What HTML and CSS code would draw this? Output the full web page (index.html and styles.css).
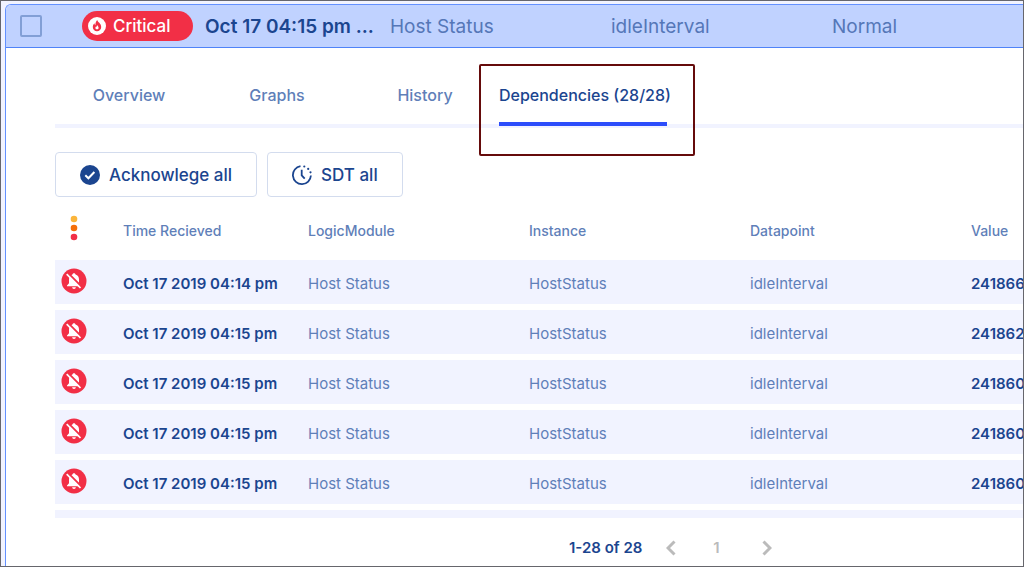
FILE: index.html
```html
<!DOCTYPE html>
<html lang="en">
<head>
    <meta charset="UTF-8">
    <meta name="viewport" content="width=device-width, initial-scale=1.0">
    <title>Alert Dependencies</title>
    <link rel="stylesheet" href="styles.css">
</head>
<body>

    <!-- Shared icons -->
    <svg class="sprite" aria-hidden="true">
        <symbol id="muted" viewBox="0 0 26 26">
            <circle cx="13" cy="13" r="12.5" fill="#f22f46"/>
            <path d="M13 5.2c.9 0 1.500.6 1.500 1.400 2.300.7 3.500 2.500 3.500 4.900v3.700l2 2.200v.8H6v-.8l2-2.200v-3.700c0-2.400 1.200-4.200 3.500-4.900 0-.8.6-1.400 1.500-1.400z" fill="#fff"/>
            <path d="M11.200 19.200h3.600c0 1-.8 1.700-1.800 1.700s-1.800-.7-1.800-1.700z" fill="#fff"/>
            <path d="M7.200 5.300 20.700 18.800" stroke="#f22f46" stroke-width="2"/>
            <path d="M5.700 6.200 19.500 20" stroke="#fff" stroke-width="1.700"/>
        </symbol>
    </svg>

    <main class="alert">
        <header class="alert-row">
            <input type="checkbox" class="alert-check" aria-label="Select alert">
            <span class="severity">
                <svg viewBox="0 0 18 18" width="18" height="18" aria-hidden="true">
                    <circle cx="9" cy="9" r="9" fill="#fff"/>
                    <path d="M9.300 3c.2 2.100 3.900 3.200 3.900 6.900 0 2.500-1.800 4.300-4.200 4.300s-4.200-1.800-4.200-4.200c0-1.700.8-2.900 1.700-3.800 0 1 .3 1.600.9 2C7.300 6.100 8 4.200 9.300 3z" fill="#f22f46"/>
                    <path d="M9.200 8c.3 1 1.400 1.500 1.400 2.700 0 .9-.7 1.600-1.600 1.600s-1.600-.7-1.600-1.600c0-.6.300-1 .6-1.300.2.300.4.4.700.4 0-.7.100-1.300.5-1.800z" fill="#fff"/>
                </svg>
                Critical
            </span>
            <strong>Oct 17 04:15 pm ...</strong>
            <span>Host Status</span>
            <span>idleInterval</span>
            <span>Normal</span>
        </header>

        <section class="details">
            <nav class="tabs">
                <a href="#overview">Overview</a>
                <a href="#graphs">Graphs</a>
                <a href="#history">History</a>
                <a href="#dependencies" class="active">Dependencies (28/28)</a>
            </nav>

            <div class="actions">
                <button type="button">
                    <svg viewBox="0 0 20 20" width="20" height="20" aria-hidden="true">
                        <circle cx="10" cy="10" r="10" fill="#1b458f"/>
                        <path d="m5.300 10.300 3.100 3 6-6.300" fill="none" stroke="#fff" stroke-width="2"/>
                    </svg>
                    Acknowlege all
                </button>
                <button type="button">
                    <svg viewBox="0 0 20 20" width="20" height="20" fill="none" stroke="#1b458f" stroke-width="1.800" aria-hidden="true">
                        <path d="M8.500 1.200A9 9 0 1 0 18.900 10.500"/>
                        <path d="M9.700 4.800v5.500l3 3.400"/>
                        <g fill="#1b458f" stroke="none">
                            <circle cx="12.300" cy="1.500" r="1.100"/>
                            <circle cx="16.200" cy="3.900" r="1.100"/>
                            <circle cx="18.500" cy="7.300" r="1.100"/>
                        </g>
                    </svg>
                    SDT all
                </button>
            </div>

            <table>
                <colgroup>
                    <col class="col-icon">
                    <col class="col-time">
                    <col class="col-name">
                    <col class="col-name">
                    <col class="col-name">
                    <col>
                </colgroup>
                <thead>
                    <tr>
                        <th aria-label="Severity">
                            <svg viewBox="0 0 26 26" width="26" height="26" aria-hidden="true">
                                <circle cx="13" cy="4" r="3.300" fill="#fbb53a"/>
                                <circle cx="13" cy="13" r="3.300" fill="#f56f0a"/>
                                <circle cx="13" cy="22" r="3.300" fill="#f22f46"/>
                            </svg>
                        </th>
                        <th>Time Recieved</th>
                        <th>LogicModule</th>
                        <th>Instance</th>
                        <th>Datapoint</th>
                        <th>Value</th>
                    </tr>
                </thead>
                <tbody>
                    <tr>
                        <td><svg width="26" height="26"><use href="#muted"/></svg></td>
                        <td class="strong">Oct 17 2019 04:14 pm</td>
                        <td>Host Status</td>
                        <td>HostStatus</td>
                        <td>idleInterval</td>
                        <td class="strong">241866</td>
                    </tr>
                    <tr>
                        <td><svg width="26" height="26"><use href="#muted"/></svg></td>
                        <td class="strong">Oct 17 2019 04:15 pm</td>
                        <td>Host Status</td>
                        <td>HostStatus</td>
                        <td>idleInterval</td>
                        <td class="strong">241862</td>
                    </tr>
                    <tr>
                        <td><svg width="26" height="26"><use href="#muted"/></svg></td>
                        <td class="strong">Oct 17 2019 04:15 pm</td>
                        <td>Host Status</td>
                        <td>HostStatus</td>
                        <td>idleInterval</td>
                        <td class="strong">241860</td>
                    </tr>
                    <tr>
                        <td><svg width="26" height="26"><use href="#muted"/></svg></td>
                        <td class="strong">Oct 17 2019 04:15 pm</td>
                        <td>Host Status</td>
                        <td>HostStatus</td>
                        <td>idleInterval</td>
                        <td class="strong">241860</td>
                    </tr>
                    <tr>
                        <td><svg width="26" height="26"><use href="#muted"/></svg></td>
                        <td class="strong">Oct 17 2019 04:15 pm</td>
                        <td>Host Status</td>
                        <td>HostStatus</td>
                        <td>idleInterval</td>
                        <td class="strong">241860</td>
                    </tr>
                    <tr class="next-row">
                        <td colspan="6"></td>
                    </tr>
                </tbody>
            </table>

            <footer class="pager">
                <strong>1-28 of 28</strong>
                <button type="button" aria-label="Previous page">
                    <svg viewBox="0 0 10 16" width="10" height="16"><path d="M8.500 1.500 2 8l6.500 6.500"/></svg>
                </button>
                <span>1</span>
                <button type="button" aria-label="Next page">
                    <svg viewBox="0 0 10 16" width="10" height="16"><path d="M1.500 1.500 8 8l-6.500 6.500"/></svg>
                </button>
            </footer>
        </section>
    </main>

</body>
</html>
```
FILE: styles.css
```css
* {
    margin: 0;
    padding: 0;
    box-sizing: border-box;
}

body {
    min-height: 100vh;
    display: flex;
    padding: 3px 0 0 4px;
    border: 1px solid #66666c;
    background-color: #f1f3ff;
    color: #5f7fb9;
    font-family: Inter, "Liberation Sans", sans-serif;
    font-size: 15px;
    overflow: hidden;
}

.sprite {
    position: absolute;
    width: 0;
    height: 0;
}

svg {
    display: block;
    flex-shrink: 0;
}

.alert {
    flex: 1;
    min-width: 0;
    border: 1px solid #6391ff;
    border-width: 1px 0 0 1px;
    border-top-left-radius: 6px;
    background-color: #fff;
    overflow: hidden;
}

/* Selected alert */
.alert-row {
    display: grid;
    grid-template-columns: 62px 123px 185px 221px 221px 1fr;
    align-items: center;
    height: 43px;
    padding-left: 14px;
    border-bottom: 1px solid #4f83f8;
    background-color: #c0d2ff;
    color: #5577b8;
    font-size: 19px;
    white-space: nowrap;
}

.alert-row strong {
    color: #1b458f;
    font-weight: 600;
}

.alert-check {
    appearance: none;
    width: 22px;
    height: 22px;
    border: 2px solid #829fd6;
    border-radius: 2px;
}

.severity {
    display: flex;
    align-items: center;
    gap: 7px;
    width: 111px;
    height: 30px;
    padding-left: 6px;
    border-radius: 15px;
    background-color: #f22f46;
    color: #fff;
    font-size: 17px;
    font-weight: 500;
}

.details {
    padding-left: 49px;
}

/* Tabs */
.tabs {
    display: flex;
    margin-top: 28px;
    height: 52px;
    border-bottom: 4px solid #f1f3ff;
}

.tabs a {
    width: 148px;
    padding-top: 9px;
    color: #5f7fb9;
    font-size: 16px;
    font-weight: 500;
    line-height: 20px;
    text-align: center;
    text-decoration: none;
    white-space: nowrap;
}

.tabs .active {
    position: relative;
    width: 168px;
    height: 50px;
    border-bottom: 4px solid #2c4dfb;
    color: #1b458f;
    text-align: left;
}

/* Highlight frame round the open tab */
.tabs .active::after {
    content: "";
    position: absolute;
    inset: -12px -28px -34px -20px;
    border: 2px solid #650b0b;
    border-radius: 2px;
}

/* Buttons */
.actions {
    display: flex;
    gap: 10px;
    margin-top: 24px;
}

.actions button {
    display: flex;
    align-items: center;
    gap: 9px;
    height: 45px;
    padding: 0 24px;
    border: 1px solid #d3dcee;
    border-radius: 4px;
    background-color: #fff;
    color: #1b458f;
    font-family: inherit;
    font-size: 17px;
    font-weight: 500;
}

/* Dependencies table */
table {
    width: 100%;
    table-layout: fixed;
    border-collapse: separate;
    border-spacing: 0 6px;
    white-space: nowrap;
}

.col-icon {
    width: 68px;
}

.col-time {
    width: 185px;
}

.col-name {
    width: 221px;
}

th {
    height: 51px;
    padding-top: 4px;
    font-size: 14px;
    font-weight: 500;
    text-align: left;
}

td {
    height: 44px;
    padding-top: 2px;
    background-color: #f1f3ff;
}

th:first-child,
td:first-child {
    padding: 0 0 2px 6px;
}

.strong {
    color: #1b458f;
    font-weight: 600;
}

.next-row td {
    height: 8px;
}

/* Pager */
.pager {
    display: flex;
    align-items: center;
    padding: 14px 0 0 514px;
    color: #bbb;
}

.pager strong {
    margin-right: 24px;
    color: #1b458f;
    font-weight: 600;
}

.pager span {
    width: 86px;
    padding-right: 6px;
    font-weight: 600;
    text-align: center;
}

.pager button {
    border: none;
    background: none;
}

.pager path {
    fill: none;
    stroke: #bbb;
    stroke-width: 3;
}
```
